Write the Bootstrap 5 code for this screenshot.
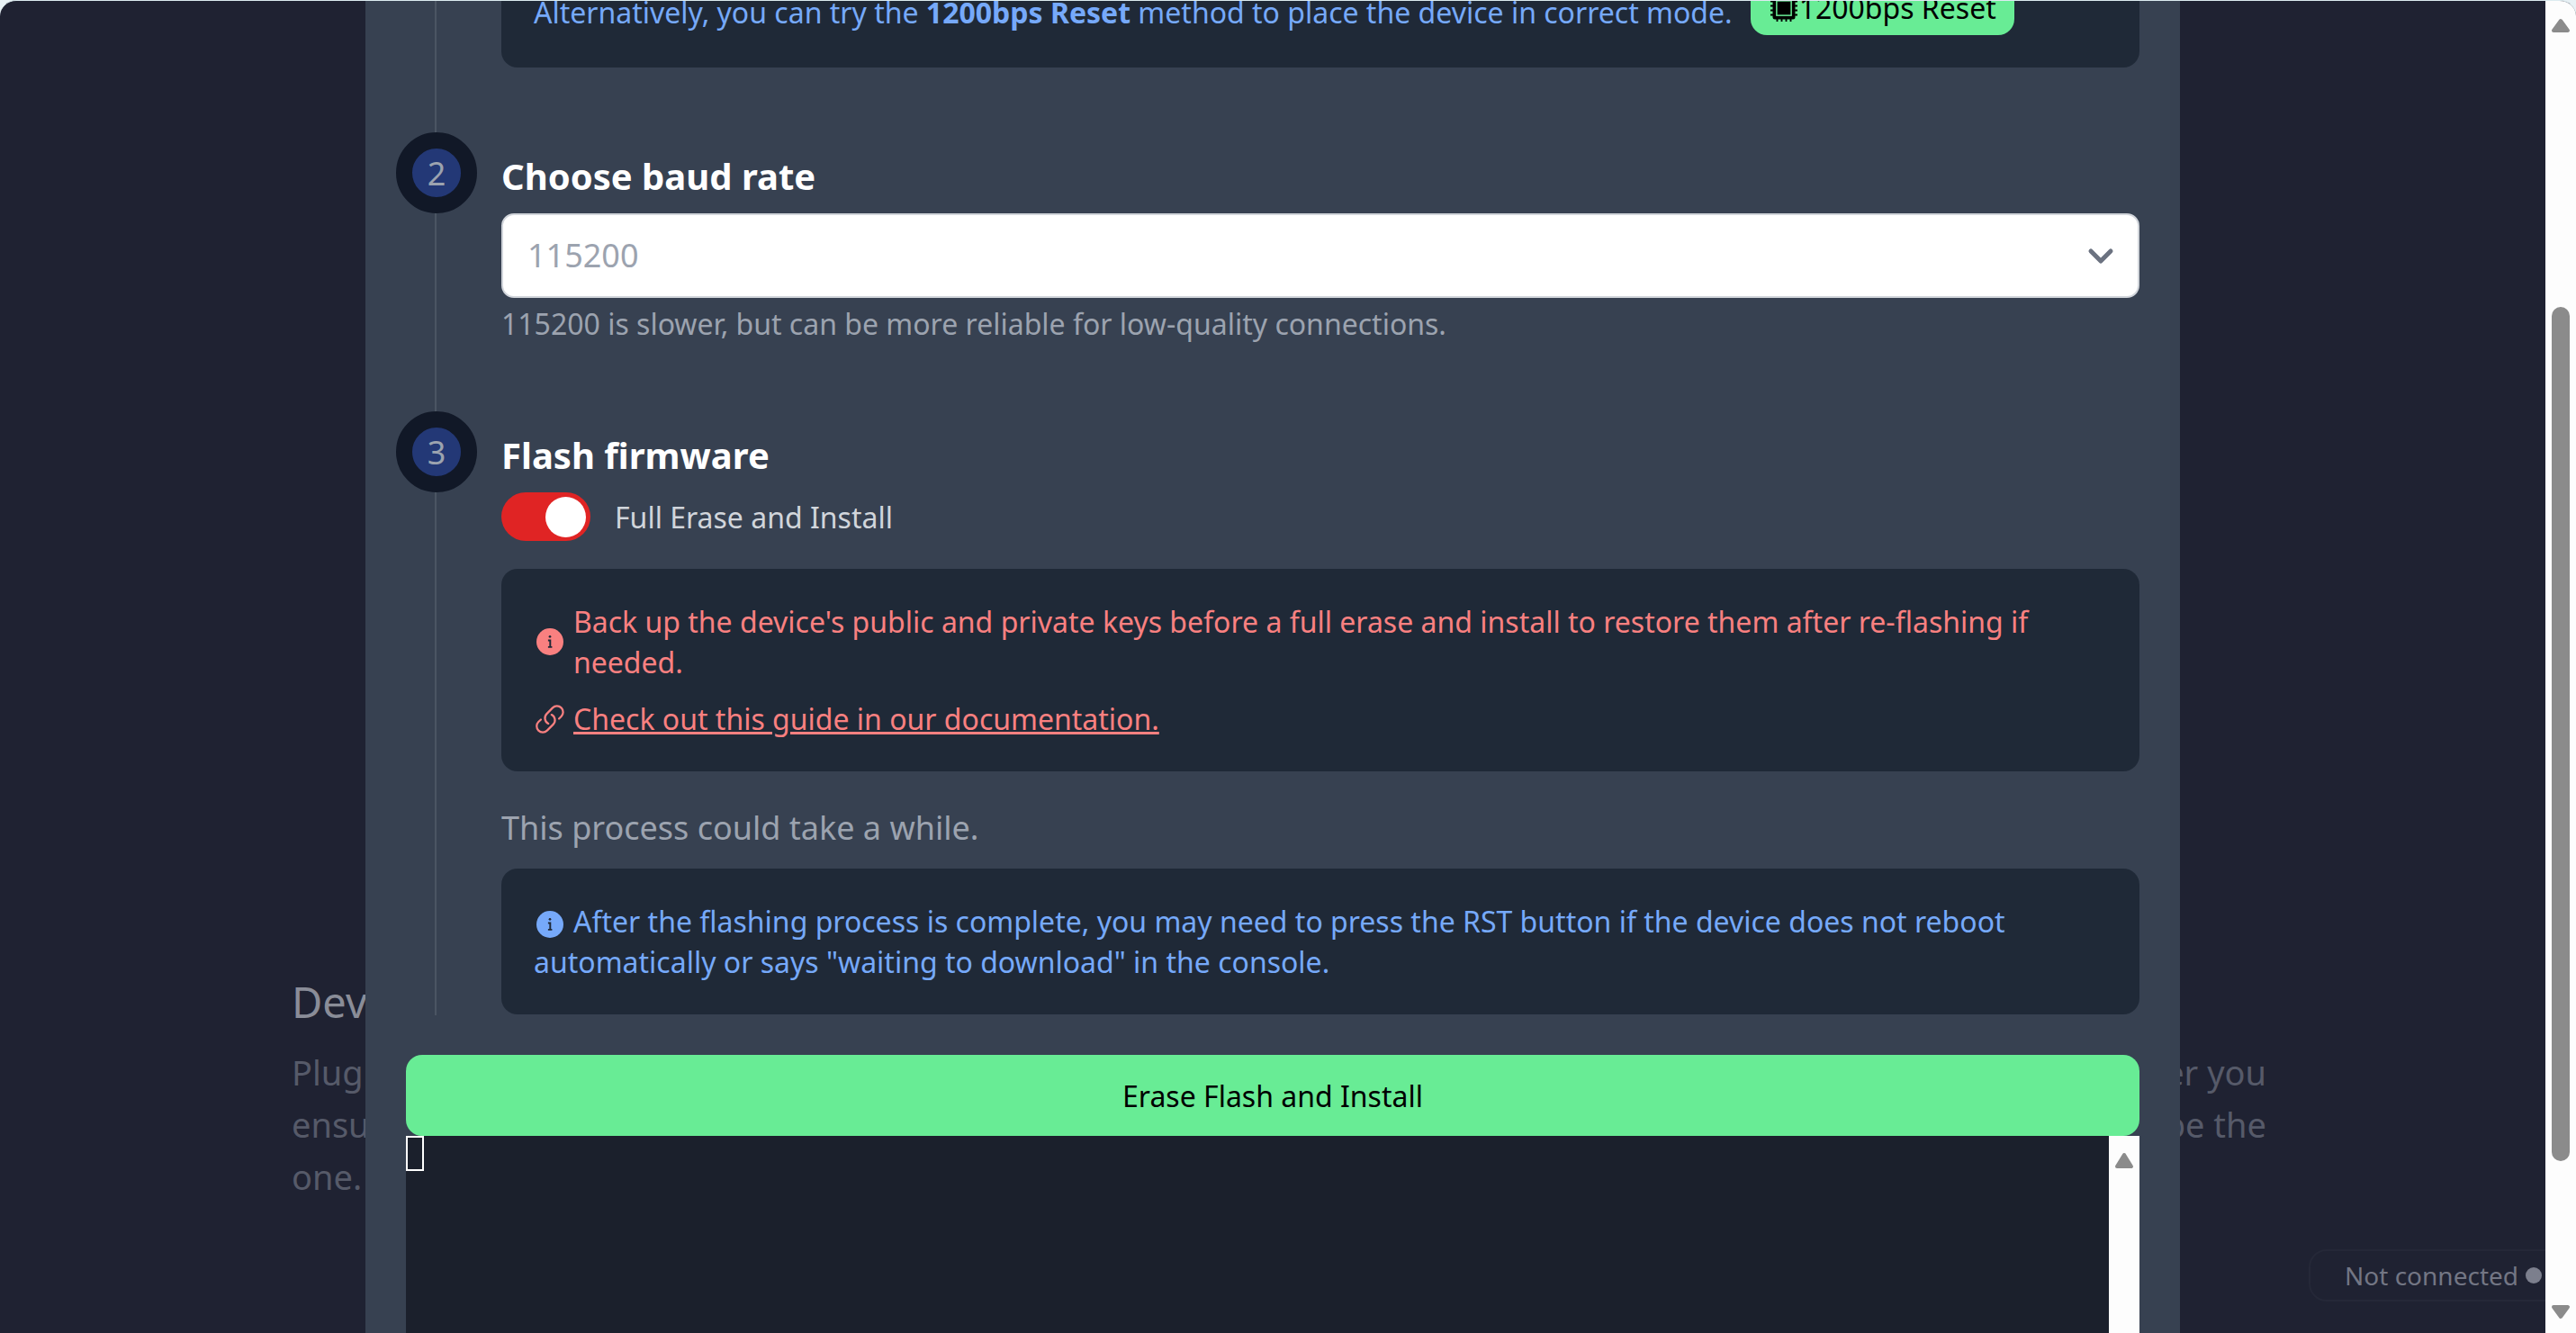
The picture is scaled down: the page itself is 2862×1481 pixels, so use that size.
<!DOCTYPE html>
<html lang="en">
<head>
<meta charset="utf-8">
<meta name="viewport" content="width=device-width, initial-scale=1">
<title>Flash device</title>
<link href="https://cdn.jsdelivr.net/npm/bootstrap@5.3.0/dist/css/bootstrap.min.css" rel="stylesheet">
<style>
  body { font-family: "Noto Sans", "Open Sans", sans-serif; font-size: 32px; line-height: 45px; background: #e8f1f5; }
  .app-shell { height: 100vh; border-top: 1px solid #dcebf0; border-radius: 18px 18px 0 0; background: #1f2232; }
  .page-text { inset: 1082px 0 auto 0; padding: 0 310px 0 324px; color: #565a69; font-size: 38px; line-height: 58px; }
  .page-text h2 { font-size: 47px; line-height: 60px; color: #8a8d98; margin-bottom: 19px; font-weight: 400; }
  .status-pill { right: -20px; bottom: 35px; height: 58px; padding: 0 22px 0 38px; border: 2px solid #252838; border-radius: 20px; color: #737684; font-size: 28px; }
  .status-dot { width: 18px; height: 18px; border-radius: 50%; background: #7c7f8d; }
  .dialog-panel { max-width: 2016px; background: #374151; padding: 0 45px; color: #9ca3af; }
  .steps { margin-left: 32px; border-left: 2px solid #4b5563; padding-left: 72px; padding-bottom: 1px; }
  .note { background: #1f2937; border-radius: 18px; padding: 36px; color: #76a9fa; }
  .note-danger { color: #f98080; gap: 18px; }
  .note-cut { margin-top: -59px; margin-bottom: 72px; }
  .note-cut-text { padding-bottom: 3px; }
  .step-num { position: absolute; left: -117px; top: 0; width: 90px; height: 90px; border: 18px solid #111827; border-radius: 50%; background: #233876; font-size: 36px; }
  .step-title { font-size: 40px; line-height: 54px; font-weight: 700; color: #fff; margin: 0; padding-top: 22px; padding-bottom: 14px; }
  .baud { height: 94px; border: 2px solid #d1d5db; border-radius: 14px; padding: 0 27px; font-size: 36px; color: #9ca3af; background-color: #fff; background-size: 30px 30px; background-position: right 26px center;
    background-image: url("data:image/svg+xml,%3Csvg xmlns='http://www.w3.org/2000/svg' viewBox='0 0 30 30'%3E%3Cpath d='M4 10l11 11 11-11' fill='none' stroke='%236b7280' stroke-width='5' stroke-linecap='round' stroke-linejoin='round'/%3E%3C/svg%3E"); }
  .baud-step { margin-bottom: 75px; }
  .hint { padding-top: 6px; }
  .form-switch .erase-toggle { width: 99px; height: 54px; margin: 0; float: none; border: 0; background-size: 45px 45px; }
  .form-switch .erase-toggle:checked { background-color: #e02424; background-position: right 5px center;
    background-image: url("data:image/svg+xml,%3Csvg xmlns='http://www.w3.org/2000/svg' viewBox='0 0 45 45'%3E%3Ccircle cx='22.5' cy='22.5' r='22.5' fill='%23fff'/%3E%3C/svg%3E"); }
  .erase-row { gap: 27px; margin-bottom: 31px; color: #d1d5db; }
  .pad-icon { width: 36px; height: 36px; flex: none; }
  .note-link { color: #f98080; }
  .wait-line { font-size: 36px; line-height: 54px; margin: 36px 0 18px; }
  .btn-flash { --bs-btn-bg: #68ec95; --bs-btn-color: #000; --bs-btn-hover-bg: #57dd85; --bs-btn-border-width: 0; --bs-btn-border-radius: 18px; font-size: 32px; line-height: 45px; }
  .btn-main { height: 90px; margin-top: 44px; }
  .btn-reset { padding: 8px 20px; margin-left: 20px; }
  .console { background: #1b202c; min-height: 219px; }
  .console-cursor { width: 20px; height: 39px; border: 2px solid #fff; }
  .track { width: 34px; background: #fdfdfd; }
  .page-track { padding: 18px 0 14px; }
  .thumb { width: 20px; border-radius: 10px; background: #8b8b8b; }
</style>
</head>
<body>
<div class="app-shell d-flex overflow-hidden">
  <main class="flex-grow-1 position-relative overflow-hidden">
    <section class="page-text position-absolute">
      <h2>Dev</h2>
      <div class="d-flex justify-content-between"><span>Plug</span><span>er you</span></div>
      <div class="d-flex justify-content-between"><span>ensu</span><span>be the</span></div>
      <div>one.</div>
    </section>
    <div class="status-pill position-absolute d-flex align-items-center gap-2"><span>Not connected</span><span class="status-dot"></span></div>

    <div class="dialog-panel position-relative mx-auto h-100 overflow-hidden">
      <div class="steps">
        <div class="note note-cut d-flex align-items-end">
          <span class="note-cut-text">Alternatively, you can try the <strong>1200bps Reset</strong> method to place the device in correct mode.</span>
          <button type="button" class="btn btn-flash btn-reset d-flex align-items-center"><svg width="34" height="30" viewBox="0 0 24 24" aria-hidden="true"><rect x="2" y="2" width="20" height="20" rx="2"/><rect x="5.500" y="5.500" width="13" height="13" fill="none" stroke="#68ec95" stroke-width="1.200"/><path d="M6 0v3M10 0v3M14 0v3M18 0v3M6 21v3M10 21v3M14 21v3M18 21v3M0 6h3M0 10h3M0 14h3M0 18h3M21 6h3M21 10h3M21 14h3M21 18h3" stroke="#000" stroke-width="1.500"/></svg>1200bps Reset</button>
        </div>
        <div class="baud-step position-relative">
          <span class="step-num d-flex align-items-center justify-content-center">2</span>
          <h3 class="step-title"><label for="baud">Choose baud rate</label></h3>
          <select id="baud" class="form-select baud"><option>115200</option></select>
          <div class="hint">115200 is slower, but can be more reliable for low-quality connections.</div>
        </div>
        <div class="position-relative">
          <span class="step-num d-flex align-items-center justify-content-center">3</span>
          <h3 class="step-title">Flash firmware</h3>
          <div class="erase-row form-switch d-flex align-items-center p-0">
            <input id="erase" class="form-check-input erase-toggle" type="checkbox" role="switch" checked>
            <label for="erase">Full Erase and Install</label>
          </div>
          <div class="note note-danger d-flex flex-column">
            <div class="d-flex align-items-center gap-2"><svg class="pad-icon" viewBox="0 0 24 24" aria-hidden="true"><circle cx="12" cy="12" r="10" fill="currentColor"/><path d="M10.600 11h1.600v4.800M10.600 15.900h3" stroke="#1f2937" stroke-width="1.300" fill="none"/><circle cx="12" cy="8.200" r=".9" fill="#1f2937"/></svg><span>Back up the device's public and private keys before a full erase and install to restore them after re-flashing if needed.</span></div>
            <div class="d-flex align-items-center gap-2"><svg class="pad-icon" viewBox="0 0 24 24" fill="none" stroke="currentColor" stroke-width="1.500" stroke-linecap="round" aria-hidden="true"><path d="M13.200 8.700a4.500 4.500 0 0 1 1.200 7.200l-4.500 4.500a4.500 4.500 0 0 1-6.400-6.400l1.800-1.700M18.700 11.700l1.700-1.700a4.500 4.500 0 0 0-6.400-6.400L9.600 8.100a4.500 4.500 0 0 0 1.200 7.200"/></svg><a class="note-link" href="#guide">Check out this guide in our documentation.</a></div>
          </div>
          <p class="wait-line">This process could take a while.</p>
          <div class="note"><svg class="pad-icon me-2" viewBox="0 0 24 24" aria-hidden="true"><circle cx="12" cy="12" r="10" fill="currentColor"/><path d="M10.600 11h1.600v4.800M10.600 15.900h3" stroke="#1f2937" stroke-width="1.300" fill="none"/><circle cx="12" cy="8.200" r=".9" fill="#1f2937"/></svg>After the flashing process is complete, you may need to press the RST button if the device does not reboot automatically or says "waiting to download" in the console.</div>
        </div>
      </div>
      <button type="button" class="btn btn-flash btn-main w-100">Erase Flash and Install</button>
      <div class="console d-flex justify-content-between">
        <span class="console-cursor"></span>
        <div class="track"><svg class="d-block mx-auto mt-3" width="22" height="22" viewBox="0 0 22 22" aria-hidden="true"><path d="M11 5l8 13H3z" fill="#8b8b8b" stroke="#8b8b8b" stroke-width="4" stroke-linejoin="round"/></svg></div>
      </div>
    </div>
  </main>
  <div class="track page-track d-flex flex-column align-items-center">
    <svg width="22" height="18" viewBox="0 0 22 18" aria-hidden="true"><path d="M11 4l8 11H3z" fill="#8b8b8b" stroke="#8b8b8b" stroke-width="4" stroke-linejoin="round"/></svg>
    <div class="flex-grow-1 d-flex flex-column py-1 w-100 align-items-center"><div style="height:21.400%"></div><div class="thumb" style="height:67.700%"></div></div>
    <svg width="22" height="20" viewBox="0 0 22 20" aria-hidden="true"><path d="M11 16l8-11H3z" fill="#8b8b8b" stroke="#8b8b8b" stroke-width="4" stroke-linejoin="round"/></svg>
  </div>
</div>
<script src="https://cdn.jsdelivr.net/npm/bootstrap@5.3.0/dist/js/bootstrap.bundle.min.js"></script>
</body>
</html>
